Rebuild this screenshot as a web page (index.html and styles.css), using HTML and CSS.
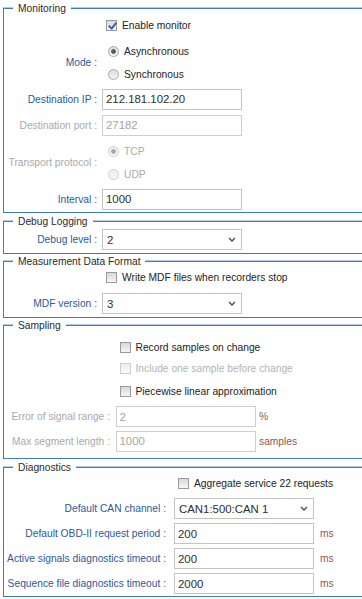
FILE: index.html
```html
<!DOCTYPE html>
<html lang="en">
<head>
<meta charset="utf-8">
<title>Monitor settings</title>
<link rel="stylesheet" href="styles.css">
</head>
<body>
<form class="settings">

  <fieldset class="group g-mon">
    <legend>Monitoring</legend>
    <div class="row r-first">
      <span class="lbl"></span>
      <label class="check"><input type="checkbox" checked>Enable monitor</label>
    </div>
    <div class="row r-group">
      <span class="lbl">Mode :</span>
      <div class="opts">
        <label class="opt"><input type="radio" name="mode" checked>Asynchronous</label>
        <label class="opt"><input type="radio" name="mode">Synchronous</label>
      </div>
    </div>
    <div class="row r26">
      <span class="lbl">Destination IP :</span>
      <input class="field" type="text" value="212.181.102.20">
    </div>
    <div class="row r26 off">
      <span class="lbl">Destination port :</span>
      <input class="field" type="text" value="27182" disabled>
    </div>
    <div class="row r-group off">
      <span class="lbl">Transport protocol :</span>
      <div class="opts">
        <label class="opt"><input type="radio" name="proto" checked disabled>TCP</label>
        <label class="opt"><input type="radio" name="proto" disabled>UDP</label>
      </div>
    </div>
    <div class="row r26">
      <span class="lbl">Interval :</span>
      <input class="field" type="text" value="1000">
    </div>
  </fieldset>

  <fieldset class="group g-dbg">
    <legend>Debug Logging</legend>
    <div class="row r-dbg">
      <span class="lbl">Debug level :</span>
      <div class="select">
        <select class="field"><option>2</option></select>
        <svg class="chev" width="8" height="5" viewBox="0 0 8 5"><path d="M1 1 L4 4 L7 1" fill="none" stroke="#4a4a4a" stroke-width="1.4"/></svg>
      </div>
    </div>
  </fieldset>

  <fieldset class="group g-mdf">
    <legend>Measurement Data Format</legend>
    <div class="row r-mdfcheck">
      <span class="lbl"></span>
      <label class="check"><input type="checkbox">Write MDF files when recorders stop</label>
    </div>
    <div class="row r27">
      <span class="lbl">MDF version :</span>
      <div class="select">
        <select class="field"><option>3</option></select>
        <svg class="chev" width="8" height="5" viewBox="0 0 8 5"><path d="M1 1 L4 4 L7 1" fill="none" stroke="#4a4a4a" stroke-width="1.4"/></svg>
      </div>
    </div>
  </fieldset>

  <fieldset class="group g-smp">
    <legend>Sampling</legend>
    <div class="row r-rec">
      <span class="lbl"></span>
      <label class="check"><input type="checkbox">Record samples on change</label>
    </div>
    <div class="row r21 off">
      <span class="lbl"></span>
      <label class="check"><input type="checkbox" disabled>Include one sample before change</label>
    </div>
    <div class="row r25">
      <span class="lbl"></span>
      <label class="check"><input type="checkbox">Piecewise linear approximation</label>
    </div>
    <div class="row r25 off">
      <span class="lbl">Error of signal range :</span>
      <input class="field" type="text" value="2" disabled>
      <span class="unit">%</span>
    </div>
    <div class="row r24 off">
      <span class="lbl">Max segment length :</span>
      <input class="field" type="text" value="1000" disabled>
      <span class="unit">samples</span>
    </div>
  </fieldset>

  <fieldset class="group g-diag">
    <legend>Diagnostics</legend>
    <div class="row r-agg">
      <span class="lbl"></span>
      <label class="check"><input type="checkbox">Aggregate service 22 requests</label>
    </div>
    <div class="row r25">
      <span class="lbl">Default CAN channel :</span>
      <div class="select">
        <select class="field"><option>CAN1:500:CAN 1</option></select>
        <svg class="chev" width="8" height="5" viewBox="0 0 8 5"><path d="M1 1 L4 4 L7 1" fill="none" stroke="#4a4a4a" stroke-width="1.4"/></svg>
      </div>
    </div>
    <div class="row r25">
      <span class="lbl">Default OBD-II request period :</span>
      <input class="field" type="text" value="200">
      <span class="unit">ms</span>
    </div>
    <div class="row r25">
      <span class="lbl">Active signals diagnostics timeout :</span>
      <input class="field" type="text" value="200">
      <span class="unit">ms</span>
    </div>
    <div class="row r25">
      <span class="lbl">Sequence file diagnostics timeout :</span>
      <input class="field" type="text" value="2000">
      <span class="unit">ms</span>
    </div>
  </fieldset>

</form>
</body>
</html>
```

FILE: styles.css
```css
html, body {
  margin: 0;
  padding: 0;
  background: #ffffff;
}

body {
  font-family: "Liberation Sans", Arial, sans-serif;
  font-size: 10.25px;
  color: #222222;
}

.settings {
  margin: 0;
  padding: 0;
}

.group {
  margin: 1px 0 0 3px;
  padding: 0;
  border: 1px solid #3f7cc6;
  border-right: 0;
  box-shadow: 0 -1px 0 #b4cae6;
  min-width: 0;
}

.g-mon { margin-top: 2px; }
.g-dbg { margin-top: 2px; }
.g-diag { margin-top: 2px; }

.group legend {
  margin-left: 9px;
  padding: 0 5px;
  font-size: 10.25px;
  line-height: 13px;
  color: #2a2a2a;
  background: #ffffff;
}

.g-mon { --lw: 93px; --gap: 5px; }
.g-dbg { --lw: 93px; --gap: 5px; }
.g-mdf { --lw: 93px; --gap: 5px; }
.g-smp { --lw: 106px; --gap: 5.5px; padding-bottom: 5px; }
.g-diag { --lw: 162px; --gap: 8px; }

.row {
  display: grid;
  grid-template-columns: var(--lw) 140px auto;
  column-gap: var(--gap);
  align-items: center;
  box-sizing: border-box;
}

.r21 { height: 21px; }
.r24 { height: 24px; }
.r25 { height: 25px; }
.r26 { height: 26px; }
.r27 { height: 27px; }
.r-first { height: 23px; padding-bottom: 3px; }
.r-group { height: 48px; }
.r-dbg { height: 25px; padding-bottom: 2px; }
.r-mdfcheck { height: 22px; padding-bottom: 3px; }
.r-rec { height: 26px; padding-top: 4px; }
.r-agg { height: 22px; padding-bottom: 4px; }

.lbl {
  text-align: right;
  color: #2b5a9c;
  white-space: nowrap;
}

.off .lbl {
  color: #a9a9a9;
}

.check {
  grid-column: 2 / -1;
  display: flex;
  align-items: center;
  white-space: nowrap;
  color: #222222;
}

.off .check {
  color: #b3b3b3;
}

.opts {
  grid-column: 2 / -1;
  display: flex;
  flex-direction: column;
  padding-top: 1px;
}

.opt {
  height: 23px;
  display: flex;
  align-items: center;
  white-space: nowrap;
  color: #222222;
}

.off .opt {
  color: #ababab;
}

input[type="checkbox"],
input[type="radio"] {
  -webkit-appearance: none;
  appearance: none;
  position: relative;
  box-sizing: border-box;
  width: 11px;
  height: 11px;
  margin: 0 5px 0 4px;
  border: 1px solid #9a9a9a;
  background: linear-gradient(#d8d8d8, #f6f6f6);
  flex: none;
}

input[type="radio"] {
  border-radius: 50%;
  margin: 0 5px 0 6px;
  border-color: #a8a8a8;
  background: linear-gradient(#dcdcdc, #f4f4f4);
}

input[type="radio"]:checked {
  background:
    radial-gradient(circle at 50% 50%, #5a5a5a 0 2px, rgba(90, 90, 90, 0) 2.6px),
    linear-gradient(#dcdcdc, #f4f4f4);
}

input[type="radio"]:disabled {
  border-color: #cfcfcf;
  background: linear-gradient(#ececec, #f8f8f8);
}

input[type="radio"]:disabled:checked {
  background:
    radial-gradient(circle at 50% 50%, #a8a8a8 0 2px, rgba(168, 168, 168, 0) 2.6px),
    linear-gradient(#ececec, #f8f8f8);
}

input[type="checkbox"]:disabled {
  border-color: #cdcdcd;
  background: linear-gradient(#eeeeee, #fafafa);
}

input[type="checkbox"]:checked::after {
  content: "";
  position: absolute;
  left: 3px;
  top: 0px;
  width: 3px;
  height: 6px;
  border: solid #3a63b6;
  border-width: 0 2px 2px 0;
  transform: rotate(40deg);
}

.field {
  box-sizing: border-box;
  width: 140px;
  height: 21px;
  margin: 0;
  padding: 0 3px;
  border: 1px solid #c3c3c3;
  border-radius: 0;
  background: #ffffff;
  font-family: "Liberation Sans", Arial, sans-serif;
  font-size: 11.4px;
  color: #2e2e2e;
  outline: none;
}

.field:disabled {
  color: #a6a6a6;
  border-color: #cfcfcf;
  background: #ffffff;
}

.select {
  position: relative;
  width: 140px;
  height: 21px;
}

.select select {
  -webkit-appearance: none;
  appearance: none;
  padding: 0 16px 0 4px;
}

.chev {
  position: absolute;
  right: 6px;
  top: 8px;
  pointer-events: none;
}

.unit {
  color: #8e5757;
  white-space: nowrap;
  margin-left: -2px;
}
```
